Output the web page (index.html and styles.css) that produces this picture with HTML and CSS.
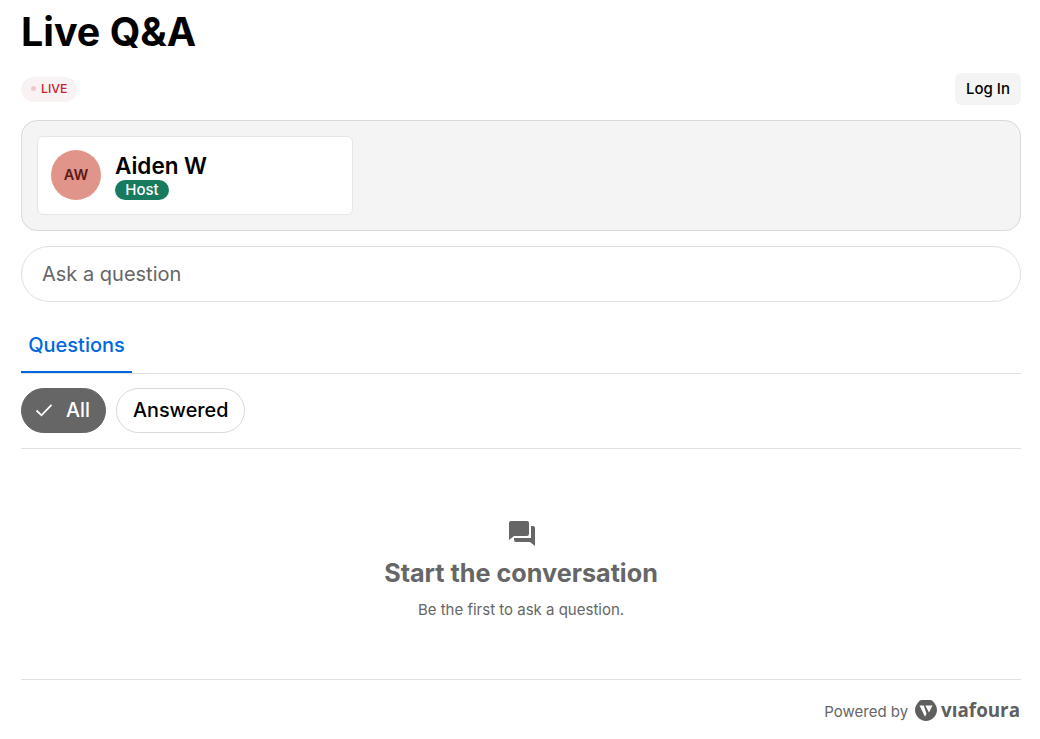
FILE: index.html
```html
<!DOCTYPE html>
<html lang="en">
<head>
<meta charset="utf-8">
<title>Live Q&amp;A</title>
<link rel="stylesheet" href="styles.css">
</head>
<body>
<main class="page">
  <h1 class="title">Live Q&amp;A</h1>
  <div class="status-row">
    <span class="live-pill"><span class="live-dot"></span>LIVE</span>
    <button class="login">Log In</button>
  </div>
  <section class="hosts">
    <div class="host-card">
      <div class="avatar">AW</div>
      <div class="host-info">
        <div class="host-name">Aiden W</div>
        <span class="host-badge">Host</span>
      </div>
    </div>
  </section>
  <div class="ask">Ask a question</div>
  <nav class="tabs"><span class="tab">Questions</span></nav>
  <div class="filters">
    <span class="chip chip-active">
      <svg class="check" viewBox="0 0 18 14" width="18" height="14"><path d="M1.5 7.500l5 4.800L16.500 1.800" fill="none" stroke="#fff" stroke-width="1.800"/></svg>
      All
    </span>
    <span class="chip">Answered</span>
  </div>
  <section class="empty">
    <svg class="empty-icon" viewBox="0 0 26 25" width="26" height="25">
      <path fill="#666" d="M2 0h16a2 2 0 0 1 2 2v11a2 2 0 0 1-2 2H5l-5 4V2a2 2 0 0 1 2-2z"/>
      <path fill="#666" d="M22 5h2a2 2 0 0 1 2 2v18l-5-4H7a2 2 0 0 1-2-2v-2h17V5z"/>
    </svg>
    <h2 class="empty-title">Start the conversation</h2>
    <p class="empty-text">Be the first to ask a question.</p>
  </section>
  <footer class="footer">
    <span class="powered">Powered by</span>
    <svg class="logo-mark" viewBox="0 0 22 22" width="22" height="22">
      <path fill="#5f5f5f" d="M6.500 1h9a3 3 0 0 1 2.600 1.500C20 4.500 22 7.500 22 11c0 5.500-5 11-11 11S0 16.500 0 11c0-3.500 2-6.500 3.900-8.500A3 3 0 0 1 6.500 1z"/>
      <path fill="#fff" d="M4.500 6.500h4.300l2.700 8.300-1.500 2.900z"/>
      <path fill="#fff" d="M10.300 6.500h7.200l-3.500 7z"/>
    </svg>
    <span class="logo-word">vıafoura</span>
  </footer>
</main>
</body>
</html>
```
FILE: styles.css
```css
* { box-sizing: border-box; }
html, body { margin: 0; padding: 0; background: #fff; }
body { font-family: Inter, "Liberation Sans", sans-serif; color: #000; }
.page { width: 1000px; margin-left: 21px; }
.title { margin: 0; font-size: 39.400px; line-height: 60px; height: 73px; padding-top: 2px; font-weight: 700; }
.status-row { display: flex; justify-content: space-between; align-items: center; height: 32px; margin-bottom: 15px; }
.live-pill { display: flex; align-items: center; gap: 5px; height: 25px; width: 56px; padding-left: 10px; padding-bottom: 1px; border-radius: 13px; background: #f9f2f3; color: #c8242f; font-size: 12.300px; font-weight: 500; }
.live-dot { width: 5px; height: 5px; border-radius: 50%; background: #f2c6ca; }
.login { width: 66px; height: 32px; border: 0; border-radius: 6px; background: #f4f4f4; color: #000; font: 500 15px Inter, sans-serif; padding: 0 0 2px; }
.hosts { height: 111px; padding: 15px; background: #f4f4f4; border: 1px solid #d9d9d9; border-radius: 16px; }
.host-card { display: flex; align-items: center; gap: 14px; width: 316px; height: 79px; padding: 0 13px 2px; background: #fff; border: 1px solid #e6e6e6; border-radius: 6px; }
.avatar { display: flex; align-items: center; justify-content: center; width: 50px; height: 50px; border-radius: 50%; background: #e19489; color: #5c1a16; font-size: 14.500px; font-weight: 600; }
.host-info { display: flex; flex-direction: column; align-items: flex-start; padding-top: 2px; }
.host-name { font-size: 22.500px; line-height: 27px; font-weight: 600; margin-bottom: 1px; }
.host-badge { width: 54px; height: 20px; border-radius: 10px; background: #187a5f; color: #fff; font-size: 15px; line-height: 19px; font-weight: 500; text-align: center; }
.ask { height: 56px; margin-top: 15px; padding-left: 20px; border: 1px solid #e0e0e0; border-radius: 28px; font-size: 20px; line-height: 54px; color: #666; }
.tabs { height: 72px; padding-top: 15px; border-bottom: 1px solid #e0e0e0; }
.tab { display: inline-block; height: 56px; width: 111px; padding-top: 13px; border-bottom: 2px solid #0068e0; color: #0068e0; font-size: 20px; line-height: 30px; font-weight: 500; text-align: center; }
.filters { display: flex; gap: 10px; height: 75px; padding-top: 14px; border-bottom: 1px solid #e0e0e0; }
.chip { display: flex; align-items: center; height: 45px; padding: 0 16px 2px; border: 1px solid #d9d9d9; border-radius: 23px; font-size: 19.800px; font-weight: 500; }
.chip-active { gap: 13px; border-color: #666; background: #666; color: #fff; width: 85px; padding-left: 13px; padding-right: 0; }
.check { flex: none; }
.empty { display: flex; flex-direction: column; align-items: center; height: 231px; padding-top: 72px; border-bottom: 1px solid #e0e0e0; }
.empty-icon { display: block; margin-left: 1px; }
.empty-title { margin: 9px 0 0; font-size: 25.200px; line-height: 36px; font-weight: 700; color: #666; }
.empty-text { margin: 9px 0 0; font-size: 15px; line-height: 20px; color: #666; }
.footer { display: flex; justify-content: flex-end; align-items: center; height: 60px; padding-right: 1px; color: #666; }
.powered { font-size: 15px; margin-right: 7px; padding-top: 2px; }
.logo-mark { display: block; margin-right: 4px; }
.logo-word { font-family: "Open Sans", sans-serif; font-size: 18.800px; font-weight: 700; color: #5f5f5f; }
```
